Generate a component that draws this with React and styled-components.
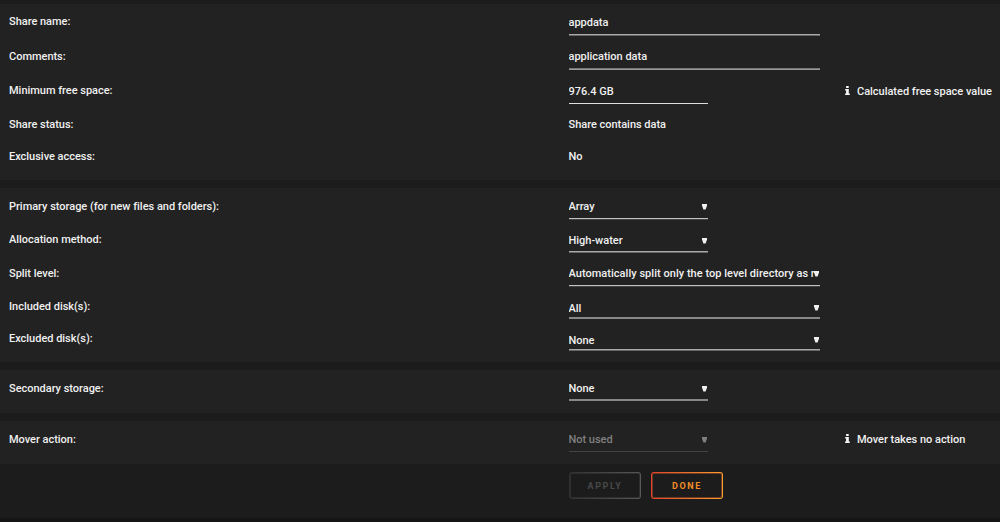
import React from 'react'
import styled, { createGlobalStyle } from 'styled-components'

const GlobalStyle = createGlobalStyle`
    body {
        margin: 0;
        background: #1c1c1c;
    }
    * {
        box-sizing: border-box;
    }
`

const InfoIcon = () => (
    <Info viewBox="0 0 5 9">
        <path d="M1.1 0h2.6v2H1.1zM0.2 3h3.6v4.4h1V9H0.1V7.4h1V4.5H0.2z" fill="#f6f6f6" />
    </Info>
)

const Select = ({ value, ...field }) => (
    <Field {...field}>
        <Value>{value}</Value>
        <Arrow viewBox="0 0 5 6">
            <path d="M0 0h5v1.5L3.6 5.4H1.4L0 1.5z" fill="currentColor" />
        </Arrow>
    </Field>
)

const App = () => {
    return (
        <Page>
            <GlobalStyle />
            <Panel $height={176}>
                <Row $height={34}>
                    <Label>Share name:</Label>
                    <Field $wide $line="#aaa" $under="#666"><Value>appdata</Value></Field>
                </Row>
                <Row $height={35}>
                    <Label $drop>Comments:</Label>
                    <Field $wide $line="#777" $under="#999"><Value>application data</Value></Field>
                </Row>
                <Row $height={34}>
                    <Label>Minimum free space:</Label>
                    <Field $line="#dedede"><Value>976.4 GB</Value></Field>
                    <Hint><InfoIcon />Calculated free space value</Hint>
                </Row>
                <Row $height={32}>
                    <Label>Share status:</Label>
                    <Text>Share contains data</Text>
                </Row>
                <Row $height={32}>
                    <Label>Exclusive access:</Label>
                    <Text>No</Text>
                </Row>
            </Panel>
            <Panel $height={174}>
                <Row $height={34}>
                    <Label $drop>Primary storage (for new files and folders):</Label>
                    <Select value="Array" $line="#c0c0c0" $under="#444" />
                </Row>
                <Row $height={33}>
                    <Label>Allocation method:</Label>
                    <Select value="High-water" $height={21} $line="#aaa" $under="#666" />
                </Row>
                <Row $height={34}>
                    <Label $drop>Split level:</Label>
                    <Select $wide $spacing="0.03px" value="Automatically split only the top level directory as required" $line="#c0c0c0" $under="#444" />
                </Row>
                <Row $height={32}>
                    <Label>Included disk(s):</Label>
                    <Select $wide value="All" $height={20} $top={2} $line="#888" $under="#888" />
                </Row>
                <Row $height={32}>
                    <Label>Excluded disk(s):</Label>
                    <Select $wide value="None" $height={20} $top={2} $line="#aaa" $under="#666" />
                </Row>
            </Panel>
            <Panel $height={43}>
                <Row $height={34}>
                    <Label $drop>Secondary storage:</Label>
                    <Select value="None" $height={21} $line="#888" $under="#888" />
                </Row>
            </Panel>
            <Panel $height={43}>
                <Row $height={34}>
                    <Label $drop>Mover action:</Label>
                    <Select value="Not used" $disabled $line="#444" />
                    <Hint><InfoIcon />Mover takes no action</Hint>
                </Row>
            </Panel>
            <Actions>
                <Button disabled>Apply</Button>
                <Button>Done</Button>
            </Actions>
            <Footer />
        </Page>
    )
}

export default App

const Page = styled.div`
    display: flex;
    flex-direction: column;
    width: 1000px;
    height: 522px;
    padding-top: 4px;
    overflow: hidden;
    background: #1c1c1c;
    color: #f0f0f0;
    font-family: Roboto, "Liberation Sans", sans-serif;
    font-size: 11px;
    font-weight: 500;
    letter-spacing: -0.02px;
    line-height: 18px;
`
const Panel = styled.section`
    flex: none;
    height: ${({ $height }) => $height}px;
    margin-bottom: 8px;
    padding: 9px 0 0 9px;
    background: #222;
`
const Row = styled.div`
    display: grid;
    grid-template-columns: 559.5px 275.5px 1fr;
    align-items: start;
    height: ${({ $height }) => $height}px;
    white-space: nowrap;
`
const Label = styled.label`
    display: block;
    padding-top: ${({ $drop }) => ($drop ? '1px' : 0)};
`
const Text = styled.span`
    display: block;
`
const Field = styled.div`
    display: flex;
    align-items: flex-start;
    width: ${({ $wide }) => ($wide ? '251.5px' : '139.5px')};
    height: ${({ $height }) => $height || 22}px;
    border-bottom: 1px solid ${({ $line }) => $line};
    box-shadow: ${({ $under }) => ($under ? `0 1px 0 ${$under}` : 'none')};
    color: ${({ $disabled }) => ($disabled ? '#808080' : '#f0f0f0')};
    letter-spacing: ${({ $spacing }) => $spacing || 'inherit'};

    span {
        padding-top: ${({ $top }) => $top || 1}px;
    }
`
const Value = styled.span`
    flex: 1;
    overflow: hidden;
`
const Arrow = styled.svg`
    flex: none;
    width: 5px;
    height: 6px;
    margin: 7px 1px 0 0;
`
const Hint = styled.div`
    display: flex;
    align-items: center;
    padding: 1px 0 0 0.5px;
`
const Info = styled.svg`
    width: 5px;
    height: 9px;
    margin: 0 7.5px 3px 0;
`
const Actions = styled.div`
    display: flex;
    gap: 10px;
    height: 46px;
    padding-left: 569px;
`
const Button = styled.button`
    width: 72px;
    height: 27px;
    padding: 0;
    border: 1px solid transparent;
    border-radius: 3px;
    background:
        linear-gradient(#1c1c1c, #1c1c1c) padding-box,
        linear-gradient(90deg, ${({ disabled }) => (disabled ? '#303030, #585858' : '#e0402c, #f9a02d')}) border-box;
    box-shadow: inset 0 0 0 1px ${({ disabled }) => (disabled ? 'rgba(80, 80, 80, 0.35)' : 'rgba(236, 110, 44, 0.4)')};
    color: ${({ disabled }) => (disabled ? '#484848' : '#f28c28')};
    font-family: inherit;
    font-size: 9px;
    font-weight: 700;
    letter-spacing: 1.6px;
    text-transform: uppercase;
`
const Footer = styled.footer`
    flex: 1;
    background: #151515;
`
